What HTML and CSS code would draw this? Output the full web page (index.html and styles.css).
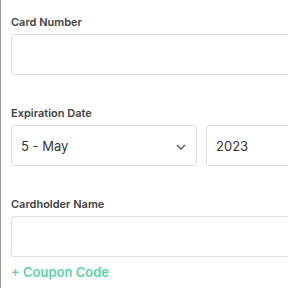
FILE: index.html
```html
<!DOCTYPE html>
<html lang="en">
<head>
    <meta charset="UTF-8">
    <title>Payment</title>
    <link rel="stylesheet" href="styles.css">
</head>
<body>
    <div class="form">
        <div class="field">
            <label class="label">Card Number</label>
            <div class="input"></div>
        </div>
        <div class="field">
            <label class="label">Expiration Date</label>
            <div class="row">
                <div class="input select">
                    <span>5 - May</span>
                    <svg class="chevron" width="10" height="6" viewBox="0 0 10 6"><path d="M1 1l4 4 4-4" fill="none" stroke="#555" stroke-width="1.3"/></svg>
                </div>
                <div class="input year"><span>2023</span></div>
            </div>
        </div>
        <div class="field">
            <label class="label">Cardholder Name</label>
            <div class="input"></div>
        </div>
        <a class="coupon">+ Coupon Code</a>
    </div>
</body>
</html>
```
FILE: styles.css
```css
* {
    margin: 0;
    box-sizing: border-box;
}
html, body {
    overflow: hidden;
}
body {
    background: #fff;
    font-family: Inter, "Liberation Sans", sans-serif;
    color: #3d3d3d;
}
.form {
    width: 420px;
    border-left: 1px solid #9c9c9c;
    padding: 16px 0 20px 10px;
    min-height: 288px;
}
.field {
    margin-bottom: 32px;
}
.label {
    display: block;
    font-size: 11px;
    line-height: 12px;
    font-weight: 600;
    color: #3f3f3f;
    margin-bottom: 6px;
}
.input {
    height: 41px;
    border: 1px solid #dedede;
    border-radius: 3px;
    background: #fff;
    display: flex;
    align-items: center;
    padding: 0 9px;
    font-size: 13px;
    color: #333;
}
.row {
    display: flex;
    gap: 9px;
}
.select {
    width: 186px;
    justify-content: space-between;
}
.chevron {
    margin-right: 1px;
    margin-top: 2px;
}
.year {
    flex: 1;
}
.field:nth-child(3) {
    margin-bottom: 7px;
}
.coupon {
    display: block;
    font-size: 13px;
    line-height: 16px;
    font-weight: 600;
    color: #5dd3a6;
}
```
